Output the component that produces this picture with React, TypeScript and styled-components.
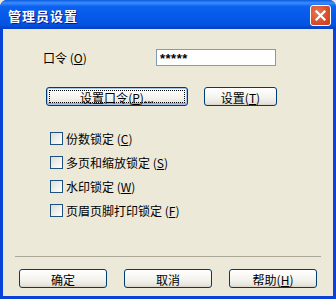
import styled, { createGlobalStyle } from "styled-components";

const GlobalStyle = createGlobalStyle`
  html, body {
    margin: 0;
    padding: 0;
    background: #ece9d8;
  }
  body {
    font-family: "Noto Sans CJK SC", "Liberation Sans", sans-serif;
    font-size: 12px;
    color: #000;
  }
`;

const Window = styled.div`
  width: 336px;
  height: 299px;
  box-sizing: border-box;
  display: flex;
  flex-direction: column;
  background: #0842d6;
  border-radius: 7px 7px 0 0;
  overflow: hidden;
`;

const TitleBar = styled.div`
  height: 29px;
  flex: none;
  display: flex;
  align-items: center;
  justify-content: space-between;
  padding: 0 5px 0 8px;
  background: linear-gradient(
    to bottom,
    #0a5ae0 0%,
    #3c8dfc 10%,
    #0c62f0 22%,
    #0658e8 60%,
    #0553e0 85%,
    #0340c8 100%
  );
`;

const Title = styled.span`
  color: #fff;
  font-weight: bold;
  font-size: 13px;
  letter-spacing: 1px;
  text-shadow: 1px 1px 0 #0a1a8c;
  margin-top: 1px;
`;

const CloseButton = styled.div`
  width: 21px;
  height: 21px;
  box-sizing: border-box;
  border: 1px solid #fff;
  border-radius: 3px;
  background: radial-gradient(circle at 35% 35%, #e87a5c 0%, #d9512c 55%, #c23d18 100%);
  display: flex;
  align-items: center;
  justify-content: center;
  margin-top: 2px;
`;

const Client = styled.div`
  flex: 1;
  margin: 0 3px 3px 3px;
  background: #ece9d8;
  display: flex;
  flex-direction: column;
`;

const PasswordRow = styled.div`
  display: flex;
  align-items: center;
  margin-top: 20px;
  padding-left: 40px;
  height: 17px;
`;

const Label = styled.span`
  width: 113px;
  white-space: nowrap;
  line-height: 17px;
`;

const Input = styled.div`
  width: 120px;
  height: 17px;
  box-sizing: border-box;
  border: 1px solid #7f9db9;
  background: #fff;
  padding-left: 3px;
  font-family: "Liberation Sans", sans-serif;
  font-weight: bold;
  font-size: 13px;
  line-height: 18px;
  letter-spacing: 0.5px;
`;

const ButtonRow = styled.div`
  display: flex;
  gap: 16px;
  margin-top: 21px;
  padding-left: 43px;
`;

const Button = styled.div<{ $w: number; $focused?: boolean }>`
  width: ${(p) => p.$w}px;
  height: 19px;
  box-sizing: border-box;
  border: 1px solid #003c74;
  border-radius: 3px;
  background: linear-gradient(to bottom, #ffffff 0%, #f4f3ee 55%, #e6e4dc 90%, #d6d0c5 100%);
  display: flex;
  align-items: center;
  justify-content: center;
  white-space: nowrap;
  line-height: 13px;
  padding-top: 1px;
  position: relative;
  box-shadow: ${(p) =>
    p.$focused ? "inset 0 0 0 1px #a9c5ef, inset 0 -1px 0 1px #89ade4" : "none"};

  &::after {
    content: "";
    display: ${(p) => (p.$focused ? "block" : "none")};
    position: absolute;
    inset: 2px;
    border: 1px dotted #000;
  }
`;

const CheckList = styled.div`
  display: flex;
  flex-direction: column;
  gap: 11px;
  margin-top: 26px;
  padding-left: 47px;
`;

const CheckRow = styled.label`
  display: flex;
  align-items: center;
  gap: 3px;
  height: 13px;
  white-space: nowrap;
`;

const Box = styled.span`
  width: 13px;
  height: 13px;
  box-sizing: border-box;
  flex: none;
  border: 1px solid #1c5180;
  background: linear-gradient(135deg, #dcdbd5 0%, #f1f0ea 55%, #ffffff 100%);
`;

const Footer = styled.div`
  margin-top: auto;
  padding: 0 12px 8px 12px;
  display: flex;
  flex-direction: column;
`;

const Separator = styled.div`
  height: 1px;
  width: 306px;
  background: #aca899;
`;

const FooterButtons = styled.div`
  display: flex;
  gap: 17px;
  margin-top: 12px;
  padding-left: 4px;
`;

const Key = ({ k }: { k: string }) => (
  <span>
    {" "}(<u>{k}</u>)
  </span>
);

const checks: { text: string; key: string }[] = [
  { text: "份数锁定", key: "C" },
  { text: "多页和缩放锁定", key: "S" },
  { text: "水印锁定", key: "W" },
  { text: "页眉页脚打印锁定", key: "F" },
];

const App = () => {
  return (
    <>
      <GlobalStyle />
      <Window>
        <TitleBar>
          <Title>管理员设置</Title>
          <CloseButton>
            <svg width="11" height="11" viewBox="0 0 11 11">
              <path d="M1.5 1.5 L9.5 9.5 M9.5 1.5 L1.5 9.5" stroke="#fff" strokeWidth="2.2" strokeLinecap="square" />
            </svg>
          </CloseButton>
        </TitleBar>
        <Client>
          <PasswordRow>
            <Label>
              口令<Key k="O" />
            </Label>
            <Input>*****</Input>
          </PasswordRow>
          <ButtonRow>
            <Button $w={142} $focused>
              设置口令<Key k="P" />...
            </Button>
            <Button $w={73}>
              设置<Key k="T" />
            </Button>
          </ButtonRow>
          <CheckList>
            {checks.map((c) => (
              <CheckRow key={c.key}>
                <Box />
                <span>
                  {c.text}
                  <Key k={c.key} />
                </span>
              </CheckRow>
            ))}
          </CheckList>
          <Footer>
            <Separator />
            <FooterButtons>
              <Button $w={88}>确定</Button>
              <Button $w={88}>取消</Button>
              <Button $w={88}>
                帮助<Key k="H" />
              </Button>
            </FooterButtons>
          </Footer>
        </Client>
      </Window>
    </>
  );
};

export default App;
